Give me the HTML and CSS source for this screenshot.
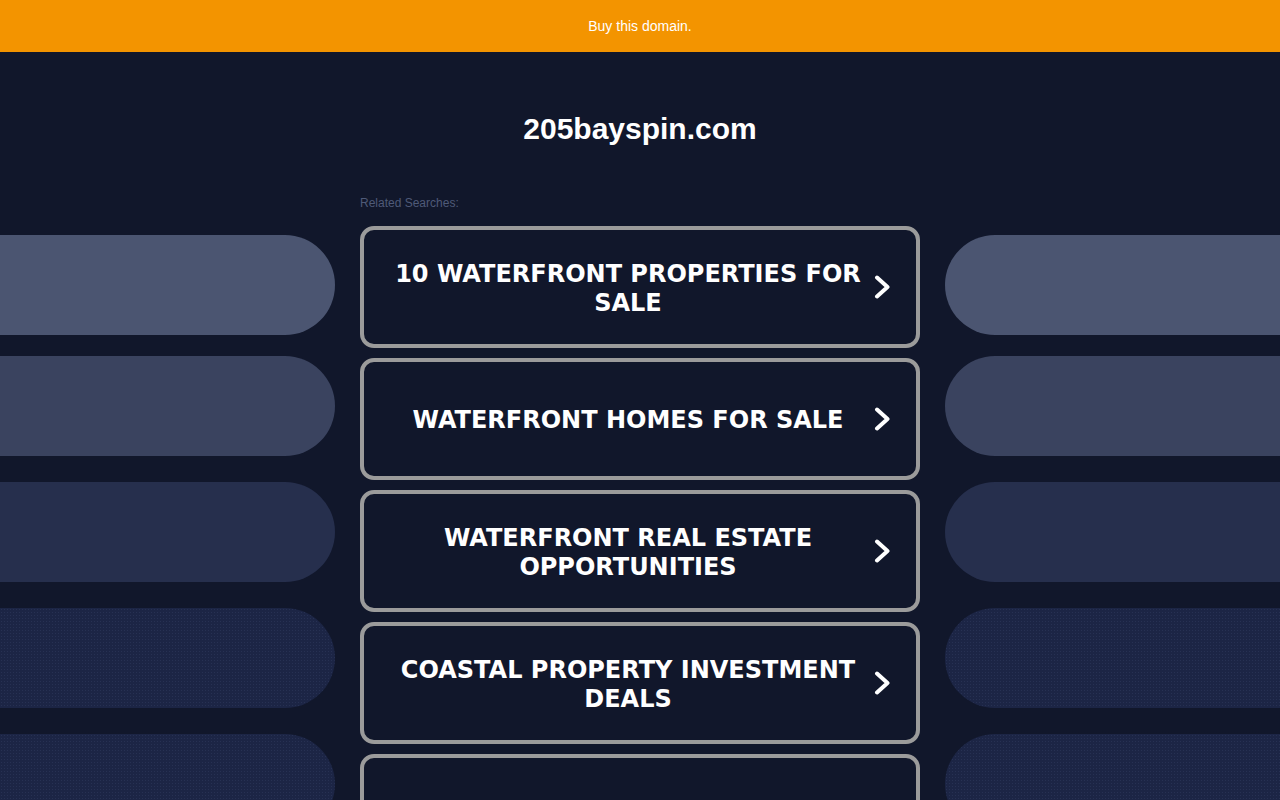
FILE: index.html
```html
<!DOCTYPE html>
<html lang="en">
<head>
<meta charset="utf-8">
<title>205bayspin.com</title>
<link rel="stylesheet" href="styles.css">
</head>
<body>
<div class="topbar"><a class="buy" href="#">Buy this domain.</a></div>
<header class="header">
  <h1 class="domain">205bayspin.com</h1>
</header>
<main class="layout">
  <div class="side side-left">
    <div class="pill pill-1"></div>
    <div class="pill pill-2"></div>
    <div class="pill pill-3"></div>
    <div class="pill pill-4"></div>
    <div class="pill pill-5"></div>
  </div>
  <section class="center">
    <p class="related">Related Searches:</p>
    <a class="card" href="#">
      <span class="card-text">10 Waterfront Properties for Sale</span>
      <svg class="chev" viewBox="0 0 20 24" width="20" height="24"><path d="M4 2.5 L14.5 12 L4 21.5" /></svg>
    </a>
    <a class="card" href="#">
      <span class="card-text">Waterfront Homes for Sale</span>
      <svg class="chev" viewBox="0 0 20 24" width="20" height="24"><path d="M4 2.5 L14.5 12 L4 21.5" /></svg>
    </a>
    <a class="card" href="#">
      <span class="card-text">Waterfront Real Estate Opportunities</span>
      <svg class="chev" viewBox="0 0 20 24" width="20" height="24"><path d="M4 2.5 L14.5 12 L4 21.5" /></svg>
    </a>
    <a class="card" href="#">
      <span class="card-text">Coastal Property Investment Deals</span>
      <svg class="chev" viewBox="0 0 20 24" width="20" height="24"><path d="M4 2.5 L14.5 12 L4 21.5" /></svg>
    </a>
    <a class="card" href="#">
      <span class="card-text">Luxury Beachfront Condos</span>
      <svg class="chev" viewBox="0 0 20 24" width="20" height="24"><path d="M4 2.5 L14.5 12 L4 21.5" /></svg>
    </a>
  </section>
  <div class="side side-right">
    <div class="pill pill-1"></div>
    <div class="pill pill-2"></div>
    <div class="pill pill-3"></div>
    <div class="pill pill-4"></div>
    <div class="pill pill-5"></div>
  </div>
</main>
</body>
</html>
```
FILE: styles.css
```css
html, body {
  margin: 0;
  padding: 0;
}
body {
  background: #11172b;
  font-family: "Liberation Sans", Arial, sans-serif;
  color: #fff;
}
.topbar {
  height: 52px;
  background: #f39400;
  display: flex;
  align-items: center;
  justify-content: center;
}
.buy {
  color: #fff;
  text-decoration: none;
  font-size: 14px;
  line-height: 16px;
}
.header {
  padding-top: 60px;
  text-align: center;
}
.domain {
  margin: 0;
  font-size: 30px;
  line-height: 34px;
  font-weight: bold;
  color: #fff;
}
.layout {
  display: grid;
  grid-template-columns: 335px 560px 335px;
  column-gap: 25px;
  margin-top: 50px;
}
.related {
  margin: 0 0 16px 0;
  font-size: 12px;
  line-height: 14px;
  color: #4f5a78;
}
.center {
  display: flex;
  flex-direction: column;
}
.card {
  box-sizing: border-box;
  height: 122px;
  margin-bottom: 10px;
  border: 4px solid #9b9b9b;
  border-radius: 14px;
  display: flex;
  align-items: center;
  padding: 0 23px 0 19px;
  text-decoration: none;
  color: #fff;
}
.card-text {
  flex: 1;
  text-align: center;
  text-transform: uppercase;
  font-family: "DejaVu Sans", "Liberation Sans", sans-serif;
  font-weight: bold;
  font-size: 24px;
  line-height: 29px;
  padding-top: 3px;
}
.chev {
  flex: none;
  display: block;
}
.chev path {
  fill: none;
  stroke: #fff;
  stroke-width: 4;
  stroke-linecap: round;
  stroke-linejoin: round;
}
.side {
  display: flex;
  flex-direction: column;
  padding-top: 39px;
}
.pill {
  height: 100px;
  flex: none;
}
.pill + .pill {
  margin-top: 26px;
}
.pill-2 {
  margin-top: 21px !important;
}
.side-left .pill {
  border-radius: 0 50px 50px 0;
}
.side-right .pill {
  border-radius: 50px 0 0 50px;
}
.pill-1 { background: #4b5571; }
.pill-2 { background: #3a435f; }
.pill-3 { background: #262f4d; }
.pill-4, .pill-5 {
  background-color: #1c2545;
  background-image: radial-gradient(rgba(60, 72, 110, 0.35) 0.7px, transparent 0.9px);
  background-size: 3px 3px;
}
```
